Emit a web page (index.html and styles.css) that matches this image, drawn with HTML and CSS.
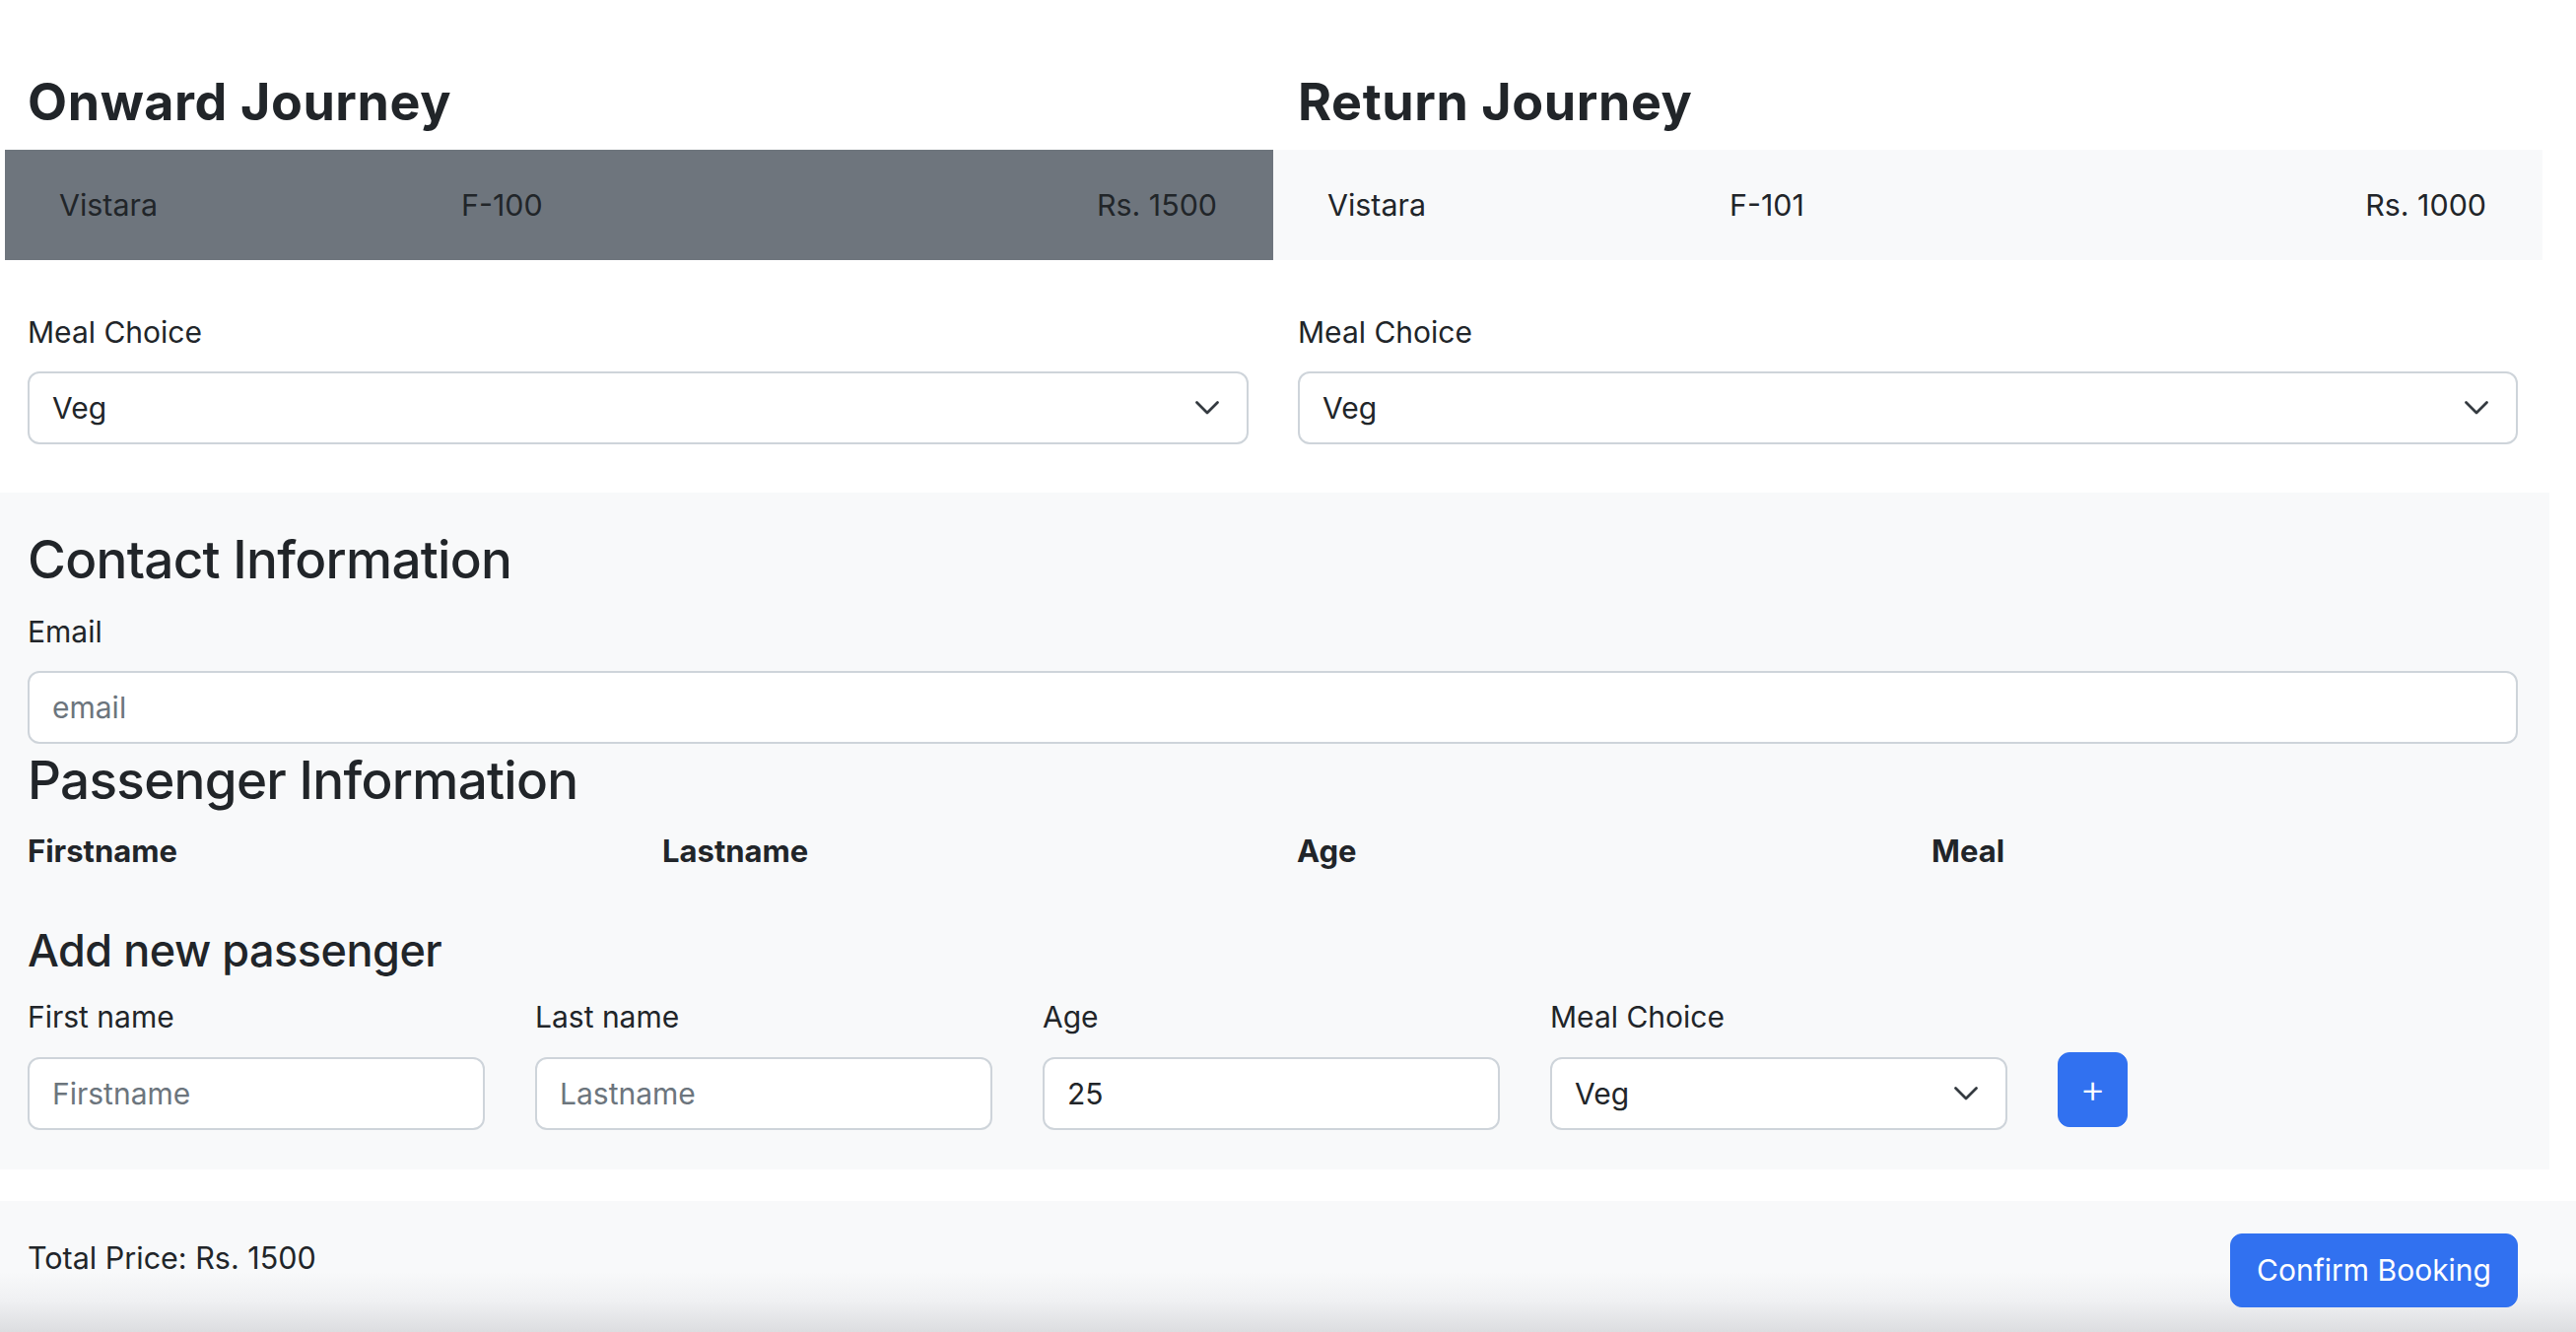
FILE: index.html
```html
<!DOCTYPE html>
<html lang="en">
<head>
<meta charset="utf-8">
<title>Booking</title>
<link rel="stylesheet" href="styles.css">
</head>
<body>
<main class="page">
  <section class="journeys">
    <div class="journey journey--onward">
      <h2 class="journey-title">Onward Journey</h2>
      <div class="flight flight--selected">
        <span class="flight-airline">Vistara</span>
        <span class="flight-number">F-100</span>
        <span class="flight-price">Rs. 1500</span>
      </div>
      <div class="journey-form">
        <label class="form-label">Meal Choice</label>
        <div class="select-wrap">
          <select class="form-control form-select"><option>Veg</option><option>Non-Veg</option></select>
          <svg class="chevron" viewBox="0 0 26 16" width="26" height="16" aria-hidden="true"><polyline points="2.5,2.5 13,13 23.5,2.5" fill="none" stroke="#343a40" stroke-width="2.8" stroke-linecap="round" stroke-linejoin="round"/></svg>
        </div>
      </div>
    </div>
    <div class="journey journey--return">
      <h2 class="journey-title">Return Journey</h2>
      <div class="flight">
        <span class="flight-airline">Vistara</span>
        <span class="flight-number">F-101</span>
        <span class="flight-price">Rs. 1000</span>
      </div>
      <div class="journey-form">
        <label class="form-label">Meal Choice</label>
        <div class="select-wrap">
          <select class="form-control form-select"><option>Veg</option><option>Non-Veg</option></select>
          <svg class="chevron" viewBox="0 0 26 16" width="26" height="16" aria-hidden="true"><polyline points="2.5,2.5 13,13 23.5,2.5" fill="none" stroke="#343a40" stroke-width="2.8" stroke-linecap="round" stroke-linejoin="round"/></svg>
        </div>
      </div>
    </div>
  </section>

  <section class="details">
    <h2 class="section-title section-title--contact">Contact Information</h2>
    <label class="form-label">Email</label>
    <input class="form-control" type="email" placeholder="email">

    <h2 class="section-title section-title--passenger">Passenger Information</h2>
    <div class="pax-head">
      <span>Firstname</span>
      <span>Lastname</span>
      <span>Age</span>
      <span>Meal</span>
    </div>

    <h3 class="sub-title">Add new passenger</h3>
    <div class="pax-form">
      <div class="field">
        <label class="form-label">First name</label>
        <input class="form-control" type="text" placeholder="Firstname">
      </div>
      <div class="field">
        <label class="form-label">Last name</label>
        <input class="form-control" type="text" placeholder="Lastname">
      </div>
      <div class="field">
        <label class="form-label">Age</label>
        <input class="form-control" type="number" value="25">
      </div>
      <div class="field">
        <label class="form-label">Meal Choice</label>
        <div class="select-wrap">
          <select class="form-control form-select"><option>Veg</option><option>Non-Veg</option></select>
          <svg class="chevron" viewBox="0 0 26 16" width="26" height="16" aria-hidden="true"><polyline points="2.5,2.5 13,13 23.5,2.5" fill="none" stroke="#343a40" stroke-width="2.8" stroke-linecap="round" stroke-linejoin="round"/></svg>
        </div>
      </div>
      <button class="btn btn-add" type="button">+</button>
    </div>
  </section>

  <footer class="summary">
    <div class="total">Total Price: Rs. 1500</div>
    <button class="btn btn-confirm" type="button">Confirm Booking</button>
  </footer>
</main>
</body>
</html>
```
FILE: styles.css
```css
* { box-sizing: border-box; }

html, body {
  margin: 0;
  padding: 0;
  background: #ffffff;
  overflow: hidden;
}

body {
  font-family: Inter, "Noto Sans", sans-serif;
  font-size: 30px;
  line-height: 45px;
  color: #212529;
}

/* ---------- journeys ---------- */
.journeys {
  display: grid;
  grid-template-columns: 1287px 1288px;
  margin-left: 5px;
  padding-top: 73px;
}

.journey {
  display: flex;
  flex-direction: column;
}

.journey-title {
  margin: 0 0 17px;
  font-size: 52px;
  line-height: 62px;
  font-weight: 700;
  letter-spacing: 0.6px;
}

.journey--onward .journey-title,
.journey--onward .journey-form { padding-left: 23px; padding-right: 25px; }
.journey--return .journey-title,
.journey--return .journey-form { padding-left: 25px; padding-right: 25px; }

.flight {
  display: grid;
  grid-template-columns: 408px 1fr auto;
  align-items: center;
  height: 112px;
  padding: 0 57px 0 55px;
  background: #f8f9fa;
  font-size: 30.4px;
}

.flight--selected { background: #6e757d; }

.flight-price { text-align: right; }

.journey-form {
  display: flex;
  flex-direction: column;
  padding-top: 51px;
  padding-bottom: 49px;
}

/* ---------- forms ---------- */
.form-label {
  display: block;
  margin-bottom: 17px;
}

.form-control {
  display: block;
  width: 100%;
  height: 74px;
  margin: 0;
  padding: 0 23px;
  font: inherit;
  color: #212529;
  background: #ffffff;
  border: 2px solid #ced4da;
  border-radius: 12px;
  outline: none;
  -webkit-appearance: none;
  appearance: none;
}

.form-control::placeholder { color: #6c757d; opacity: 1; }

.form-control[type=number]::-webkit-inner-spin-button,
.form-control[type=number]::-webkit-outer-spin-button { -webkit-appearance: none; margin: 0; }

.form-select { padding-right: 70px; }

.select-wrap { position: relative; }

.chevron {
  position: absolute;
  right: 29px;
  top: 50%;
  transform: translateY(-50%);
  pointer-events: none;
}

/* ---------- details ---------- */
.details {
  width: 2587px;
  padding: 36px 32px 40px 28px;
  background: #f8f9fa;
}

.section-title {
  margin: 0;
  font-size: 53px;
  line-height: 64px;
  font-weight: 500;
  letter-spacing: -0.7px;
}

.section-title--contact { margin-bottom: 19px; }
.section-title--passenger { margin-top: 5px; }

.pax-head {
  display: grid;
  grid-template-columns: repeat(4, 644px);
  margin-top: 17px;
  font-size: 31px;
  line-height: 46px;
  font-weight: 700;
}

.sub-title {
  margin: 50px 0 0;
  font-size: 45px;
  line-height: 56px;
  font-weight: 500;
  letter-spacing: -0.5px;
}

.pax-form {
  display: grid;
  grid-template-columns: repeat(4, 464px) 71px;
  column-gap: 51px;
  align-items: end;
  margin-top: 17px;
}

.pax-form .form-label { margin-bottom: 18px; }

/* ---------- buttons ---------- */
.btn {
  font: inherit;
  color: #ffffff;
  background: #3171f0;
  border: 1px solid #3171f0;
  border-radius: 12px;
  cursor: pointer;
}

.btn-add {
  width: 71px;
  height: 76px;
  margin-bottom: 3px;
  padding: 0 0 3px;
  font-size: 40px;
  font-weight: 300;
  line-height: 1;
}

.btn-confirm {
  padding: 14px 26px;
  line-height: 45px;
}

/* ---------- footer ---------- */
.summary {
  display: flex;
  justify-content: space-between;
  align-items: flex-start;
  height: 133px;
  margin-top: 32px;
  padding: 33px 59px 0 28px;
  background: linear-gradient(to bottom, #f8f9fa 0, #f8f9fa 72px, #eff0f2 102px, #dcdde0 133px);
}

.total { margin-top: 2px; font-size: 30.5px; }
```
